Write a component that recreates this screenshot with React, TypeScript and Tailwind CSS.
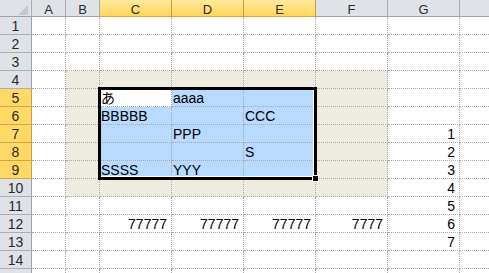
import React from "react";

const COLS = ["A", "B", "C", "D", "E", "F", "G", ""];

type Cell = { t: string; r?: boolean };
const DATA: Record<string, Cell> = {
  C5: { t: "あ" },
  D5: { t: "aaaa" },
  C6: { t: "BBBBB" },
  E6: { t: "CCC" },
  D7: { t: "PPP" },
  E8: { t: "S" },
  C9: { t: "SSSS" },
  D9: { t: "YYY" },
  G7: { t: "1", r: true },
  G8: { t: "2", r: true },
  G9: { t: "3", r: true },
  G10: { t: "4", r: true },
  G11: { t: "5", r: true },
  G12: { t: "6", r: true },
  G13: { t: "7", r: true },
  C12: { t: "77777", r: true },
  D12: { t: "77777", r: true },
  E12: { t: "77777", r: true },
  F12: { t: "7777", r: true },
};

const FONT = "font-['Liberation_Sans','Noto_Sans_CJK_JP',sans-serif]";

function bodyCellClass(r: number, c: number) {
  const inSel = c >= 2 && c <= 4 && r >= 5 && r <= 9;
  const inBeige = c >= 1 && c <= 5 && r >= 4 && r <= 10;
  let bg = "bg-white";
  if (inSel) bg = r === 5 && c === 2 ? "bg-white" : "bg-[#B8DAFF]";
  else if (inBeige) bg = "bg-[#EEECE1]";
  const right = c === 7 ? "" : "border-r border-dotted";
  return `${bg} ${right} border-b border-dotted border-[#A8A8A8]`;
}

export default function App() {
  const rows = Array.from({ length: 15 }, (_, i) => i + 1);
  return (
    <div className={`relative h-[273px] w-[489px] overflow-hidden bg-white ${FONT} text-black`}>
      <div className="grid grid-cols-[32px_34px_34px_72px_72px_72px_72px_72px_1fr] grid-rows-[17px_repeat(15,18px)]">
        {/* corner */}
        <div className="relative border-r border-b border-r-[#A9AFB8] border-b-[#9DA3AB] bg-[#DFE3E8]">
          <svg className="absolute left-[18px] top-[5px]" width="10" height="10" viewBox="0 0 10 10">
            <polygon points="10,0 10,10 0,10" fill="#C3C8CF" />
          </svg>
        </div>
        {COLS.map((h, c) => {
          const hi = c >= 2 && c <= 4;
          return (
            <div
              key={"h" + c}
              className={
                hi
                  ? "flex items-end justify-center border-r border-b border-r-[#C99D45] border-b-[#D9A441] bg-linear-to-b from-[#FFE99A] to-[#FFD65C] text-[13px] leading-[13px] text-[#2A2A2A]"
                  : c === 7
                  ? "flex items-end justify-center border-b border-b-[#9DA3AB] bg-[#DFE3E8] text-[13px] leading-[13px] text-[#2A2A2A]"
                  : "flex items-end justify-center border-r border-b border-r-[#A9AFB8] border-b-[#9DA3AB] bg-[#DFE3E8] text-[13px] leading-[13px] text-[#2A2A2A]"
              }
            >
              {h}
            </div>
          );
        })}
        {rows.map((r) => {
          const hi = r >= 5 && r <= 9;
          return (
            <React.Fragment key={"r" + r}>
              <div
                className={
                  hi
                    ? "flex items-end justify-center border-r border-b border-r-[#C99D45] border-b-[#D9A441] bg-[#FFD966] text-[14px] leading-[16px] text-[#2A2A2A]"
                    : "flex items-end justify-center border-r border-b border-r-[#9DA3AB] border-b-[#A9AFB8] bg-[#DFE3E8] text-[14px] leading-[16px] text-[#2A2A2A]"
                }
              >
                {r}
              </div>
              {COLS.map((h, c) => {
                const cell = h ? DATA[h + r] : undefined;
                return (
                  <div
                    key={"c" + r + "-" + c}
                    className={`${bodyCellClass(r, c)} flex items-end overflow-visible whitespace-nowrap text-[14px] leading-[16px] ${
                      cell && cell.r ? "justify-end pr-[4px]" : "justify-start pl-[1px]"
                    }`}
                  >
                    {cell ? cell.t : null}
                  </div>
                );
              })}
            </React.Fragment>
          );
        })}
      </div>
      {/* selection border */}
      <div className="pointer-events-none absolute left-[98px] top-[87px] h-[93px] w-[219px] border-[3px] border-black">
        <div className="h-full w-full border-r border-b border-white" />
      </div>
      {/* fill handle */}
      <div className="absolute left-[312px] top-[175px] h-[7px] w-[7px] border border-white bg-black" />
    </div>
  );
}
